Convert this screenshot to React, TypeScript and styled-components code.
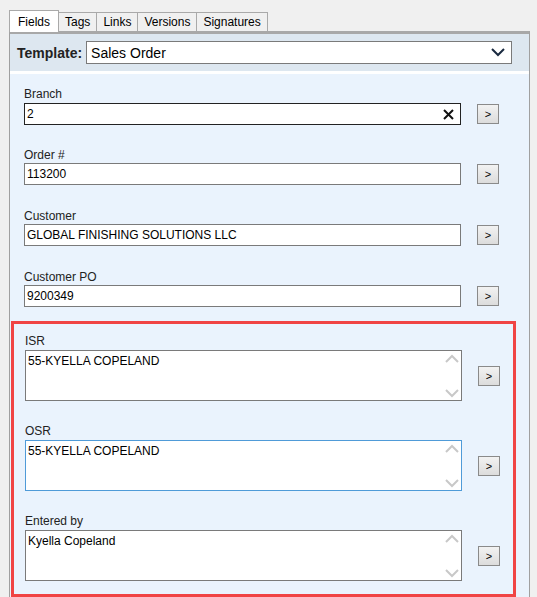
import React from "react";
import styled, { createGlobalStyle } from "styled-components";

const G = createGlobalStyle`
  body { margin: 0; background: #f0f0f0; font-family: "Liberation Sans", Arial, sans-serif; }
`;
const Page = styled.div`width:537px;height:597px;overflow:hidden;background:#f0f0f0;position:relative;`;
const Tabs = styled.div`display:flex;padding:11px 0 0 9px;height:20px;align-items:flex-end;`;
const Tab = styled.div<{ $active?: boolean }>`
  height:${p => (p.$active ? 22 : 19)}px;box-sizing:border-box;padding:0 6px;
  border:1px solid #a9a9a9;border-bottom:none;margin-right:-1px;font-size:12px;
  display:flex;align-items:center;background:${p => (p.$active ? "#fff" : "#f0f0f0")};
  ${p => p.$active && "position:relative;z-index:1;margin-bottom:-1px;padding:0 8px;"}
`;
const Panel = styled.div`margin-left:9px;width:521px;height:600px;box-sizing:border-box;border:1px solid #a0a0a0;border-top:3px solid #a8a8a8;background:#eaf3fd;`;
const Header = styled.div`height:37px;background:#dde7f0;border-bottom:3px solid #fff;display:flex;align-items:center;padding-left:7px;gap:4px;`;
const TLabel = styled.span`font-weight:bold;font-size:14px;color:#222;`;
const Select = styled.div`width:426px;height:23px;box-sizing:border-box;border:1px solid #7a7a7a;background:#fff;display:flex;align-items:center;justify-content:space-between;padding:0 6px 0 4px;font-size:14px;`;
const Body = styled.div`padding:13px 0 0 0;`;
const Field = styled.div<{ $area?: boolean }>`padding-left:14px;height:${p => (p.$area ? 90 : 61)}px;`;
const Label = styled.div`font-size:12px;color:#222;height:15px;`;
const Row = styled.div`display:flex;align-items:center;gap:16px;`;
const Input = styled.div<{ $dark?: boolean }>`width:437px;height:22px;box-sizing:border-box;border:1px solid ${p => (p.$dark ? "#222" : "#7a7a7a")};background:#fff;font-size:12px;display:flex;align-items:center;justify-content:space-between;padding:0 6px 0 2px;margin-top:${p => (p.$dark ? 1 : 0)}px;`;
const Area = styled.div<{ $focus?: boolean }>`width:437px;height:51px;box-sizing:border-box;border:1px solid ${p => (p.$focus ? "#4f9bd8" : "#7a7a7a")};background:#fff;font-size:12px;display:flex;justify-content:space-between;padding:3px 2px 0 2px;`;
const Scroll = styled.div`display:flex;flex-direction:column;justify-content:space-between;height:44px;color:#c8c8c8;`;
const Btn = styled.div`width:22px;height:20px;box-sizing:border-box;border:1px solid #8a8a8a;background:linear-gradient(#f2f2f2,#dcdcdc);font-size:11px;display:flex;align-items:center;justify-content:center;`;
const Group = styled.div`margin-left:-13px;margin-top:-10px;width:505px;height:276px;box-sizing:border-box;border:3px solid #f04444;padding-top:10px;padding-left:11px;`;

const Chev = ({ up }: { up?: boolean }) => (
  <svg width="14" height="9" viewBox="0 0 14 9"><path d={up ? "M1 8 L7 2 L13 8" : "M1 1 L7 7 L13 1"} fill="none" stroke="#c8c8c8" strokeWidth="2" /></svg>
);

const TextField = ({ label, value, dark, clear }: { label: string; value: string; dark?: boolean; clear?: boolean }) => (
  <Field>
    <Label>{label}</Label>
    <Row>
      <Input $dark={dark}><span>{value}</span>{clear && <svg width="11" height="11" viewBox="0 0 11 11"><path d="M1 1L10 10M10 1L1 10" stroke="#111" strokeWidth="2" /></svg>}</Input>
      <Btn>&gt;</Btn>
    </Row>
  </Field>
);
const AreaField = ({ label, value, focus }: { label: string; value: string; focus?: boolean }) => (
  <Field $area style={{ paddingLeft: 0 }}>
    <Label>{label}</Label>
    <Row style={{ marginTop: 1 }}>
      <Area $focus={focus}><span>{value}</span><Scroll><Chev up /><Chev /></Scroll></Area>
      <Btn>&gt;</Btn>
    </Row>
  </Field>
);

export default function App() {
  return (
    <Page>
      <G />
      <Tabs>
        <Tab $active>Fields</Tab><Tab>Tags</Tab><Tab>Links</Tab><Tab>Versions</Tab><Tab>Signatures</Tab>
      </Tabs>
      <Panel>
        <Header>
          <TLabel>Template:</TLabel>
          <Select><span>Sales Order</span><svg width="14" height="9" viewBox="0 0 14 9"><path d="M1 1L7 7L13 1" fill="none" stroke="#1a2a40" strokeWidth="2" /></svg></Select>
        </Header>
        <Body>
          <TextField label="Branch" value="2" dark clear />
          <TextField label="Order #" value="113200" />
          <TextField label="Customer" value="GLOBAL FINISHING SOLUTIONS LLC" />
          <TextField label="Customer PO" value="9200349" />
          <Field>
            <Group>
              <AreaField label="ISR" value="55-KYELLA COPELAND" />
              <AreaField label="OSR" value="55-KYELLA COPELAND" focus />
              <AreaField label="Entered by" value="Kyella Copeland" />
            </Group>
          </Field>
        </Body>
      </Panel>
    </Page>
  );
}
